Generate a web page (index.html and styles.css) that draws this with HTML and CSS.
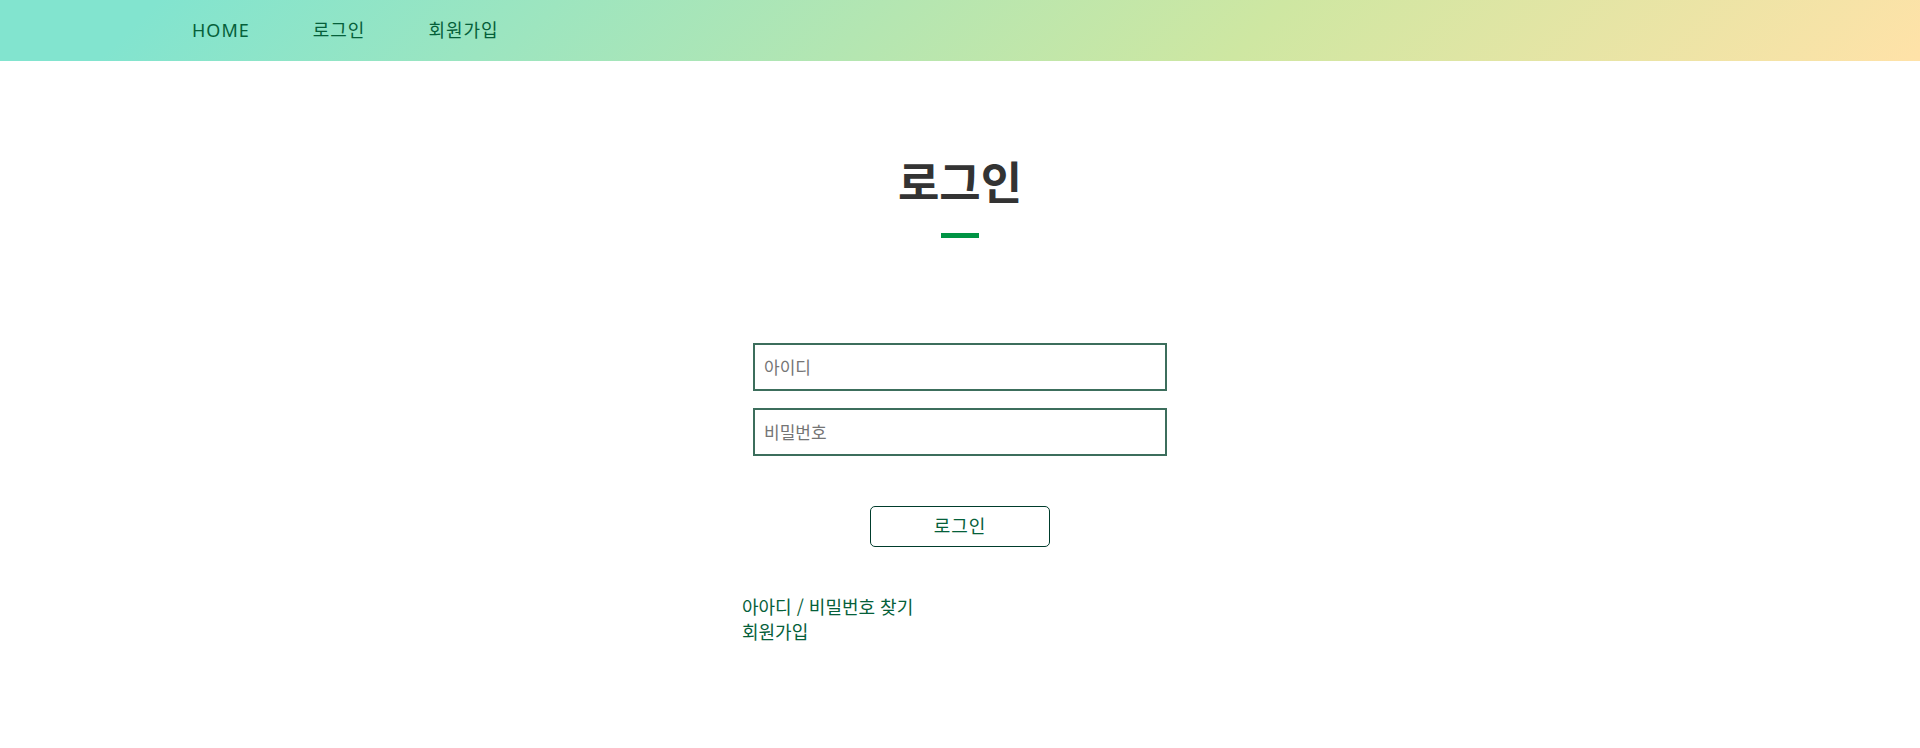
FILE: index.html
```html
<!DOCTYPE html>
<html lang="ko">
<head>
<meta charset="utf-8">
<meta name="viewport" content="width=device-width, initial-scale=1">
<title>로그인</title>
<link rel="stylesheet" href="styles.css">
</head>
<body>
<header class="site-header">
  <nav class="nav">
    <a class="nav-link" href="#">HOME</a>
    <a class="nav-link" href="#">로그인</a>
    <a class="nav-link" href="#">회원가입</a>
  </nav>
</header>
<main class="login">
  <h1 class="title">로그인</h1>
  <form class="form">
    <input class="field" type="text" name="id" placeholder="아이디" aria-label="아이디">
    <input class="field" type="password" name="password" placeholder="비밀번호" aria-label="비밀번호">
    <button class="submit" type="button">로그인</button>
  </form>
  <div class="links">
    <a class="link" href="#">아아디 / 비밀번호 찾기</a>
    <a class="link" href="#">회원가입</a>
  </div>
</main>
</body>
</html>
```
FILE: styles.css
```css
* {
  box-sizing: border-box;
}

body {
  margin: 0;
  background: #fff;
  color: #05603a;
  font-family: "Noto Sans", "Noto Sans CJK KR", sans-serif;
  font-size: 18px;
  line-height: 25px;
}

a {
  color: inherit;
  text-decoration: none;
}

.site-header {
  padding: 18px 10%;
  background: linear-gradient(135deg, #82e4cf 8%, #cee7a2 65%, #ffe2a8);
}

.nav {
  display: flex;
  gap: 63px;
}

.nav-link {
  letter-spacing: 1px;
}

.login {
  max-width: 436px;
  margin: 0 auto;
  padding-top: 88px;
}

.title {
  display: flex;
  flex-direction: column;
  align-items: center;
  gap: 16px;
  margin: 0;
  color: #333;
  font-size: 45px;
  line-height: 68px;
}

.title::after {
  content: "";
  width: 38px;
  height: 5px;
  background: #009444;
}

.form {
  display: flex;
  flex-direction: column;
  align-items: center;
  gap: 17px;
  margin-top: 105px;
  padding: 0 11px;
}

.field {
  width: 100%;
  height: 48px;
  padding: 0 9px;
  border: 2px solid #3c6e5c;
  background: #fff;
  color: #333;
  font: inherit;
  font-size: 17px;
}

.field::placeholder {
  color: #757575;
}

.submit {
  width: 180px;
  height: 41px;
  margin-top: 33px;
  border: 1px solid #003c2c;
  border-radius: 5px;
  background: #fff;
  color: inherit;
  font: inherit;
  letter-spacing: 1px;
}

.links {
  display: flex;
  flex-direction: column;
  align-items: flex-start;
  margin-top: 47px;
  font-family: "Noto Sans CJK KR", sans-serif;
}
```
